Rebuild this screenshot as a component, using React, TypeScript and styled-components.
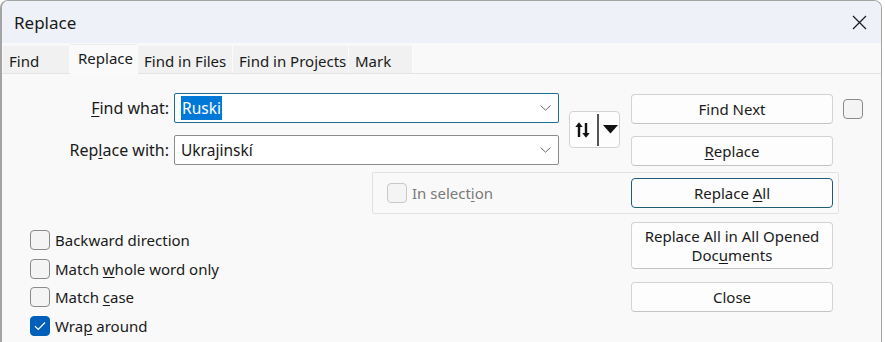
import React from "react";
import styled, { createGlobalStyle } from "styled-components";

const Global = createGlobalStyle`
  html, body { margin: 0; padding: 0; background: #ffffff; }
  body { font-family: "Noto Sans", "Open Sans", sans-serif; color: #1a1a1a; }
  * { box-sizing: border-box; }
`;

const Window = styled.div`
  width: 882px;
  height: 342px;
  border: 1px solid #a4a4a4;
  border-left-width: 2px;
  border-bottom: none;
  border-radius: 8px 8px 0 0;
  background: #f9f9f9;
  overflow: hidden;
  display: flex;
  flex-direction: column;
`;

const TitleBar = styled.div`
  height: 42px;
  flex: none;
  background: #eff1f8;
  display: flex;
  align-items: center;
  justify-content: space-between;
  padding: 0 14px 0 12px;
  font-size: 17px;
`;

const TabStrip = styled.div`
  height: 31px;
  flex: none;
  display: flex;
  align-items: flex-end;
  padding-left: 1px;
  border-bottom: 1px solid #e4e4e4;
  background: #f9f9f9;
`;

const Tab = styled.div<{ $w: number; $active?: boolean }>`
  width: ${(p) => p.$w}px;
  height: ${(p) => (p.$active ? 30 : 28)}px;
  margin-bottom: ${(p) => (p.$active ? -1 : 0)}px;
  padding: ${(p) => (p.$active ? "1px 0 0 8px" : "3px 0 0 6px")};
  background: ${(p) => (p.$active ? "#fafafa" : "#f1f1f1")};
  border-right: 1px solid #fbfbfb;
  border-top: 1px solid ${(p) => (p.$active ? "#ececec" : "#f6f6f6")};
  font-size: 15px;
  line-height: 24px;
  white-space: nowrap;
`;

const Body = styled.div`
  flex: 1;
  display: grid;
  grid-template-columns: 139px 5px 198px 187px 10px 51px 11px 202px 6px 4px 19px;
  grid-template-rows: 31px 11px 31px 6px 42px 8px 47px 13px 30px;
  padding: 19px 0 0 28px;
  font-size: 15px;
`;

const Place = styled.div<{ $col: string; $row: string; $align?: string; $justify?: string }>`
  grid-column: ${(p) => p.$col};
  grid-row: ${(p) => p.$row};
  align-self: ${(p) => p.$align || "stretch"};
  justify-self: ${(p) => p.$justify || "stretch"};
  min-width: 0;
`;

const Label = styled.label`
  display: block;
  height: 30px;
  line-height: 30px;
  font-size: 16px;
  text-align: right;
  white-space: nowrap;
`;

const Combo = styled.div<{ $focused?: boolean }>`
  height: 30px;
  background: #ffffff;
  border: 1px solid ${(p) => (p.$focused ? "#1a6e8e" : "#8c8c8c")};
  border-radius: 2px;
  display: flex;
  align-items: center;
  justify-content: space-between;
  padding: 0 7px 0 6px;
  font-size: 15.5px;
`;

const Selected = styled.span`
  background: #0078d7;
  color: #ffffff;
  line-height: 24px;
  padding: 0 1px;
`;

const Button = styled.div<{ $h?: number; $focused?: boolean }>`
  height: ${(p) => p.$h || 30}px;
  background: #fdfdfd;
  border: 1px solid ${(p) => (p.$focused ? "#1d5c78" : "#d3d3d3")};
  border-bottom-color: ${(p) => (p.$focused ? "#1d5c78" : "#c4c4c4")};
  border-radius: 4px;
  display: flex;
  flex-direction: column;
  align-items: center;
  justify-content: center;
  text-align: center;
  line-height: 19px;
  padding: 0 8px;
  position: relative;
  z-index: 1;
`;

const ButtonLine = styled.span`
  display: block;
  white-space: nowrap;
`;

const SwapButton = styled.div`
  width: 51px;
  height: 37px;
  background: #fdfdfd;
  border: 1px solid #d3d3d3;
  border-radius: 4px;
  display: flex;
  align-items: center;
  padding-left: 5px;
`;

const SwapDivider = styled.div`
  width: 1.5px;
  height: 32px;
  background: #555555;
  margin: 0 4px 0 7px;
`;

const GroupBox = styled.div`
  height: 100%;
  border: 1px solid #e2e2e2;
  border-radius: 2px;
  display: flex;
  align-items: center;
  padding-left: 14px;
`;

const Options = styled.div`
  display: flex;
  flex-direction: column;
  gap: 8.7px;
  margin-top: 8px;
`;

const CheckRow = styled.div<{ $disabled?: boolean }>`
  display: flex;
  align-items: center;
  gap: 5px;
  height: 20px;
  white-space: nowrap;
  color: ${(p) => (p.$disabled ? "#7a7a7a" : "#1a1a1a")};
`;

const Box = styled.div<{ $checked?: boolean; $disabled?: boolean }>`
  width: 20px;
  height: 20px;
  flex: none;
  border-radius: 4px;
  border: 1px solid
    ${(p) => (p.$checked ? "#005fb8" : p.$disabled ? "#c8c8c8" : "#8a8a8a")};
  background: ${(p) => (p.$checked ? "#005fb8" : "#f4f4f4")};
  display: flex;
  align-items: center;
  justify-content: center;
`;

const U = styled.span`
  text-decoration: underline;
  text-underline-offset: 2px;
  text-decoration-thickness: 1px;
`;

const Chevron = () => (
  <svg width="11" height="6" viewBox="0 0 11 6">
    <path d="M0.5 0.5 L5.5 5.2 L10.5 0.5" fill="none" stroke="#6a6a6a" strokeWidth="1" />
  </svg>
);

const CloseIcon = () => (
  <svg width="15" height="15" viewBox="0 0 15 15">
    <path d="M1 1 L14 14 M14 1 L1 14" stroke="#1f1f1f" strokeWidth="1.3" />
  </svg>
);

const SwapIcon = () => (
  <svg width="15" height="16" viewBox="0 0 15 16">
    <path d="M4 15 V3" stroke="#111" strokeWidth="2.4" />
    <path d="M0.3 5 L4 0.3 L7.7 5 Z" fill="#111" />
    <path d="M11 1 V13" stroke="#111" strokeWidth="2.4" />
    <path d="M7.3 11 L11 15.7 L14.7 11 Z" fill="#111" />
  </svg>
);

const DownTriangle = () => (
  <svg width="15" height="9" viewBox="0 0 15 9">
    <path d="M0 0 H15 L7.5 8.5 Z" fill="#111" />
  </svg>
);

const Check = () => (
  <svg width="12" height="10" viewBox="0 0 12 10">
    <path d="M1 5.2 L4.3 8.4 L11 1.5" fill="none" stroke="#ffffff" strokeWidth="1.2" />
  </svg>
);

const CheckOption = ({
  checked,
  disabled,
  children,
}: {
  checked?: boolean;
  disabled?: boolean;
  children: React.ReactNode;
}) => (
  <CheckRow $disabled={disabled}>
    <Box $checked={checked} $disabled={disabled}>{checked && <Check />}</Box>
    <span>{children}</span>
  </CheckRow>
);

export default function App() {
  return (
    <>
      <Global />
      <Window>
        <TitleBar>
          <span>Replace</span>
          <CloseIcon />
        </TitleBar>
        <TabStrip>
          <Tab $w={67}>Find</Tab>
          <Tab $w={68} $active>Replace</Tab>
          <Tab $w={95}>Find in Files</Tab>
          <Tab $w={116}>Find in Projects</Tab>
          <Tab $w={64}>Mark</Tab>
        </TabStrip>
        <Body>
          <Place $col="1 / 2" $row="1 / 2" $align="start" $justify="end">
            <Label><U>F</U>ind what:</Label>
          </Place>
          <Place $col="3 / 5" $row="1 / 2" $align="start">
            <Combo $focused>
              <Selected>Ruski</Selected>
              <Chevron />
            </Combo>
          </Place>
          <Place $col="6 / 7" $row="1 / 4" $align="center">
            <SwapButton>
              <SwapIcon />
              <SwapDivider />
              <DownTriangle />
            </SwapButton>
          </Place>
          <Place $col="8 / 9" $row="1 / 2" $align="end">
            <Button>Find Next</Button>
          </Place>
          <Place $col="11 / 12" $row="1 / 2" $align="center">
            <Box />
          </Place>

          <Place $col="1 / 2" $row="3 / 4" $align="start" $justify="end">
            <Label>Rep<U>l</U>ace with:</Label>
          </Place>
          <Place $col="3 / 5" $row="3 / 4" $align="start">
            <Combo>
              <span>Ukrajinskí</span>
              <Chevron />
            </Combo>
          </Place>
          <Place $col="8 / 9" $row="3 / 4" $align="end">
            <Button><ButtonLine><U>R</U>eplace</ButtonLine></Button>
          </Place>

          <Place $col="4 / 10" $row="5 / 6">
            <GroupBox>
              <CheckOption disabled>In select<U>i</U>on</CheckOption>
            </GroupBox>
          </Place>
          <Place $col="8 / 9" $row="5 / 6" $align="center">
            <Button $focused><ButtonLine>Replace <U>A</U>ll</ButtonLine></Button>
          </Place>

          <Place $col="8 / 9" $row="7 / 8">
            <Button $h={47}>
              <ButtonLine>Replace All in All Opened</ButtonLine>
              <ButtonLine>Doc<U>u</U>ments</ButtonLine>
            </Button>
          </Place>
          <Place $col="1 / 5" $row="7 / 10" $align="start">
            <Options>
              <CheckOption>Backward direction</CheckOption>
              <CheckOption>Match <U>w</U>hole word only</CheckOption>
              <CheckOption>Match <U>c</U>ase</CheckOption>
              <CheckOption checked>Wra<U>p</U> around</CheckOption>
            </Options>
          </Place>
          <Place $col="8 / 9" $row="9 / 10">
            <Button>Close</Button>
          </Place>
        </Body>
      </Window>
    </>
  );
}
